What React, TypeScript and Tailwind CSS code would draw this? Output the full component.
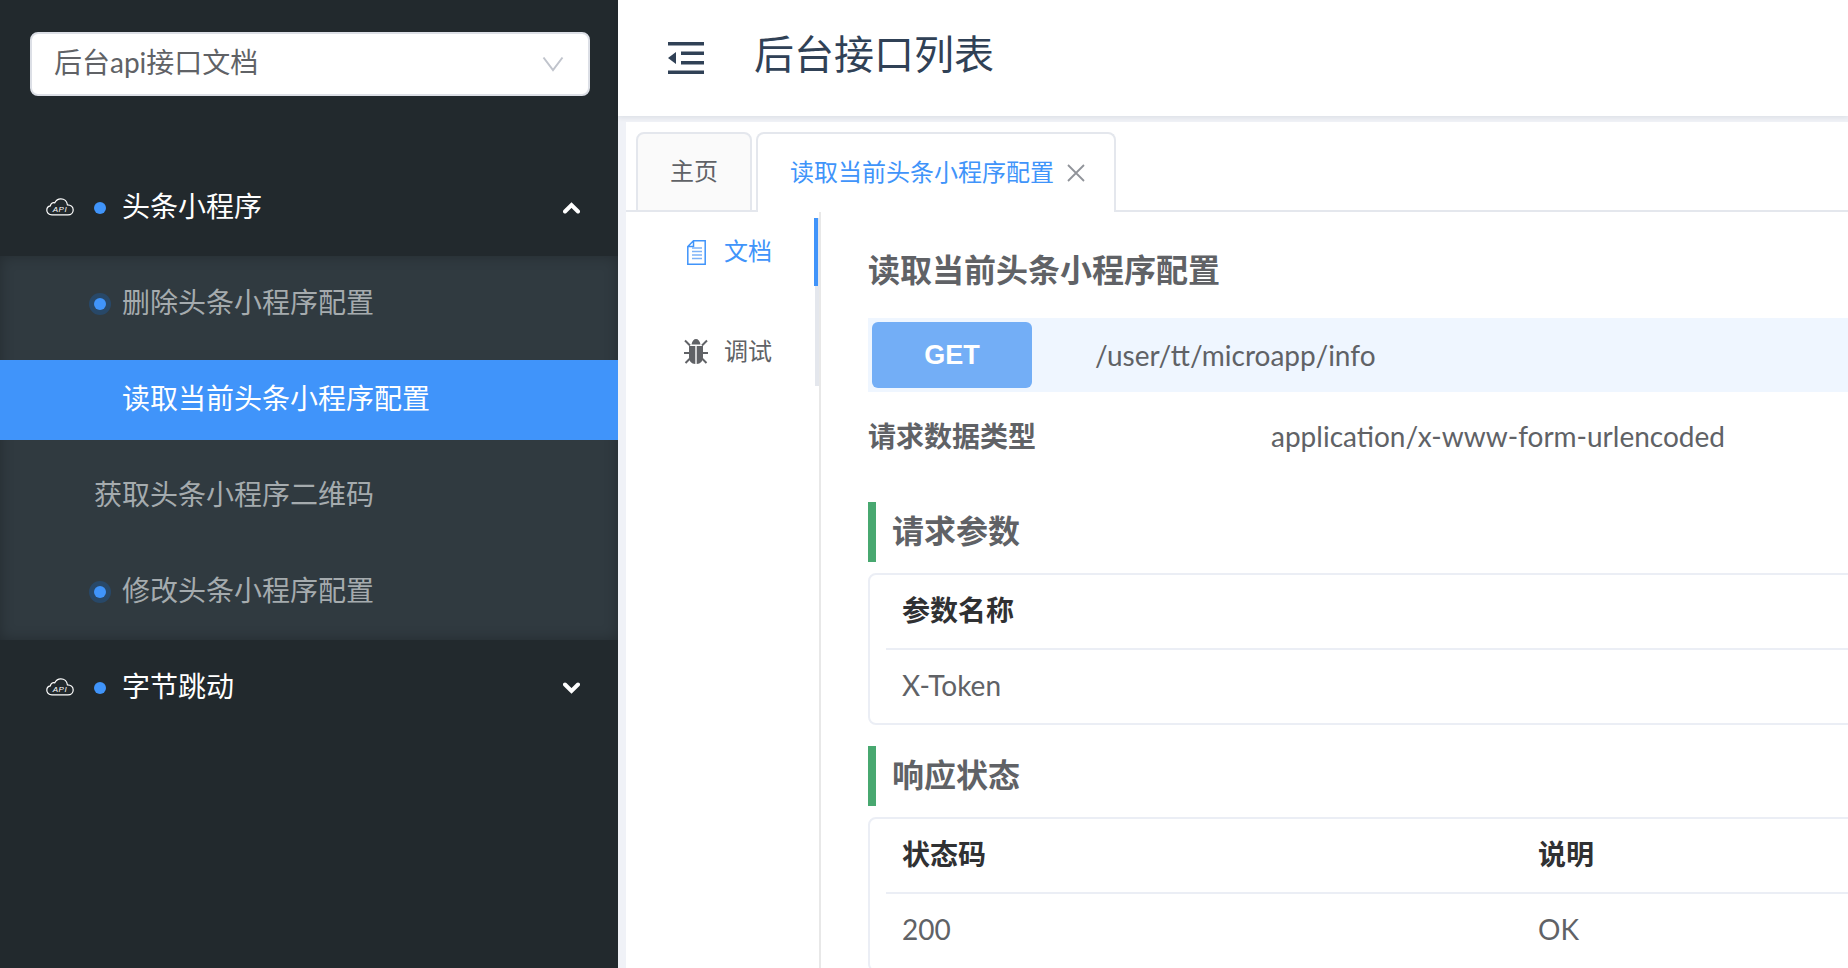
const font = "font-['Lato','Noto_Sans_CJK_SC',sans-serif]";

const CloudIcon = () => (
  <svg width="28" height="18" viewBox="0 0 28 18" fill="none" className="mb-[3px] shrink-0">
    <path
      d="M6 16.800 C2.800 16.800 .8 14.800 .8 12.200 C.8 10 2.200 8.200 4.400 7.800 C4.600 5.400 6.600 4.200 8.800 4.800 C10 2.200 12.400 .8 14.800 .8 C18.400 .8 21 3.400 21.400 6.800 C24.800 6.800 27.200 9 27.200 12 C27.200 14.800 25 16.800 22 16.800 Z"
      stroke="#fff"
      strokeWidth="1.200"
    />
    <text x="14" y="13.600" textAnchor="middle" fill="#fff" fontSize="8" fontStyle="italic" letterSpacing=".6" fontFamily="Liberation Sans">API</text>
  </svg>
);

const Chevron = ({ up }: { up?: boolean }) => (
  <svg width="17" height="12" viewBox="0 0 17 12" fill="none" className="shrink-0">
    <path d={up ? "M2 9.500 L8.500 3 L15 9.500" : "M2 2.500 L8.500 9 L15 2.500"} stroke="#fff" strokeWidth="4" strokeLinecap="round" />
  </svg>
);

const DocIcon = () => (
  <svg width="19" height="25" viewBox="0 0 19 25" fill="none">
    <path d="M6.500 .8 H18.200 V24.200 H.8 V6.500 Z M6.500 .8 V6.500 H.8" stroke="#4094fa" strokeWidth="1.500" />
    <path d="M5 8 H15 M5 11.500 H15 M5 15 H15 M5 18.500 H15" stroke="#7db2f7" strokeWidth="1.500" />
  </svg>
);

const BugIcon = () => (
  <svg width="24" height="26" viewBox="0 0 24 26" fill="#606266">
    <path d="M7.500 5.500 C8 2 10 0 12 0 C14 0 16 2 16.500 5.500 Z" />
    <path d="M5 7 H11.300 V25 C7.500 25 5 22 5 18 Z M12.700 7 H19 V18 C19 22 16.500 25 12.700 25 Z" />
    <path d="M1 1.500 L6 6.500 M23 1.500 L18 6.500 M0 14 H6 M18 14 H24 M1.500 24 L6 19.500 M22.500 24 L18 19.500" stroke="#606266" strokeWidth="2" fill="none" />
  </svg>
);

const Dot = ({ halo }: { halo?: boolean }) => (
  <span className={`block h-3 w-3 shrink-0 rounded-full bg-[#4094fa] ${halo ? "shadow-[0_0_0_5px_#284868]" : ""}`} />
);

const children = [
  { label: "删除头条小程序配置", dot: true },
  { label: "读取当前头条小程序配置", active: true },
  { label: "获取头条小程序二维码", plain: true },
  { label: "修改头条小程序配置", dot: true },
];

const Group = ({ label, open }: { label: string; open?: boolean }) => (
  <div className="flex h-20 items-center pl-[46px] pr-[38px] text-[28px] text-white">
    <CloudIcon />
    <span className="ml-5"><Dot /></span>
    <span className="ml-4 flex-1 pb-[5px]">{label}</span>
    <Chevron up={open} />
  </div>
);

const Section = ({ title }: { title: string }) => (
  <div className="flex h-[60px] items-center border-l-8 border-[#48a870] pl-4 text-[32px] font-bold text-[#606266]">
    <span className="pb-[2px]">{title}</span>
  </div>
);

export default function App() {
  return (
    <div className={`flex h-screen overflow-hidden ${font}`}>
      <aside className="w-[618px] shrink-0 bg-[#22292d] pt-8">
        <div className="mx-[30px] flex h-16 w-[560px] items-center justify-between rounded-lg border-2 border-[#dcdfe6] bg-white pl-[22px] pr-[24px] text-[28px] text-[#606266]">
          <span className="pb-[5px]">后台api接口文档</span>
          <svg width="22" height="16" viewBox="0 0 22 16" fill="none">
            <path d="M1.500 1.500 L11 14 L20.500 1.500" stroke="#c0c4cc" strokeWidth="2" />
          </svg>
        </div>
        <nav className="mt-16 py-2">
          <Group label="头条小程序" open />
          <div className="mt-2 bg-[#303a40] py-2 text-[28px] text-[#a5abae] shadow-[inset_0_0_14px_rgba(0,0,0,0.25)]">
            <div className="flex flex-col gap-4">
              {children.map((item) => (
                <div
                  key={item.label}
                  className={`flex h-20 items-center ${item.plain ? "pl-[94px]" : "pl-[94px]"} ${item.active ? "bg-[#4094fa] pl-[122px] text-white" : ""}`}
                >
                  {item.dot && <Dot halo />}
                  <span className={`pb-[5px] ${item.dot ? "ml-4" : ""}`}>{item.label}</span>
                </div>
              ))}
            </div>
          </div>
          <div className="mt-2">
            <Group label="字节跳动" />
          </div>
        </nav>
      </aside>

      <main className="flex min-w-0 flex-1 flex-col bg-[#f0f2f7]">
        <header className="relative flex h-[116px] shrink-0 items-center bg-white pl-[50px] text-[40px] text-[#304156] shadow-[0_2px_5px_rgba(0,21,41,0.08)]">
          <svg width="36" height="32" viewBox="0 0 36 32" fill="#304156">
            <path d="M0 0 H36 V3.500 H0 Z M0 28.500 H36 V32 H0 Z M13 9.500 H36 V13 H13 Z M13 19 H36 V22.500 H13 Z M8 10 V22 L0 16 Z" />
          </svg>
          <span className="ml-[50px] pb-[9px]">后台接口列表</span>
        </header>

        <div className="ml-2 mt-[6px] flex min-h-0 flex-1 flex-col bg-white">
          <div className="mt-[10px] flex h-[80px] shrink-0 gap-1 border-b-2 border-[#e4e7ed] pl-[10px] text-[24px]">
            <div className="-mb-[2px] flex h-[80px] w-[116px] items-center justify-center rounded-t-lg border-2 border-[#e4e7ed] bg-[#fafafa] text-[#606266]">
              <span className="pb-[2px]">主页</span>
            </div>
            <div className="-mb-[2px] flex h-[80px] w-[360px] items-center rounded-t-lg border-2 border-b-0 border-[#e4e7ed] bg-white pl-8 text-[#4094fa]">
              <span className="pb-[2px]">读取当前头条小程序配置</span>
              <svg width="18" height="18" viewBox="0 0 18 18" className="ml-[13px]" stroke="#909399" strokeWidth="1.800">
                <path d="M1 1 L17 17 M17 1 L1 17" />
              </svg>
            </div>
          </div>

          <div className="flex min-h-0 flex-1">
            <div className="relative mt-[6px] h-[168px] w-[193px] shrink-0 border-r-4 border-[#e4e7ed] text-[24px]">
              <span className="absolute -right-[3px] top-0 h-[68px] w-1 bg-[#4094fa]" />
              <div className="flex h-[68px] items-center gap-4 pl-[58px] text-[#4094fa]">
                <span className="flex w-6 justify-center"><DocIcon /></span>
                <span className="pb-[2px]">文档</span>
              </div>
              <div className="mt-8 flex h-[68px] items-center gap-4 pl-[58px] text-[#606266]">
                <span className="flex w-6 justify-center"><BugIcon /></span>
                <span className="pb-[2px]">调试</span>
              </div>
            </div>

            <div className="min-w-0 flex-1 overflow-hidden border-l-2 border-[#e8e8e8] pl-[47px] text-[28px] text-[#606266]">
              <div className="mt-[34px] flex h-12 items-center text-[32px] font-bold">读取当前头条小程序配置</div>

              <div className="mt-6 flex h-[74px] items-center bg-[#eff6ff] pl-1">
                <span className="flex h-[66px] w-40 items-center justify-center rounded-md bg-[#73aef6] font-['Liberation_Sans',sans-serif] text-[27px] font-bold text-white">GET</span>
                <span className="ml-[63px]">/user/tt/microapp/info</span>
              </div>

              <div className="mt-5 flex h-12 items-center">
                <span className="w-[403px] font-bold">请求数据类型</span>
                <span>application/x-www-form-urlencoded</span>
              </div>

              <div className="mt-[42px]"><Section title="请求参数" /></div>
              <div className="-mr-10 mt-[11px] rounded-lg border-2 border-[#ebeef5] pl-4">
                <div className="flex h-[75px] items-center border-b-2 border-[#ebeef5] pl-4 font-bold text-[#303133]">
                  <span className="pb-1">参数名称</span>
                </div>
                <div className="flex h-[73px] items-center pl-4">
                  <span className="pb-1">X-Token</span>
                </div>
              </div>

              <div className="mt-[21px]"><Section title="响应状态" /></div>
              <div className="-mr-10 mt-[11px] rounded-lg border-2 border-[#ebeef5] pl-4">
                <div className="grid h-[75px] grid-cols-[636px_1fr] items-center border-b-2 border-[#ebeef5] pl-4 font-bold text-[#303133]">
                  <span className="pb-1">状态码</span>
                  <span className="pb-1">说明</span>
                </div>
                <div className="grid h-[76px] grid-cols-[636px_1fr] items-center pl-4">
                  <span className="pb-[6px]">200</span>
                  <span className="pb-[6px]">OK</span>
                </div>
              </div>
            </div>
          </div>
        </div>
      </main>
    </div>
  );
}
